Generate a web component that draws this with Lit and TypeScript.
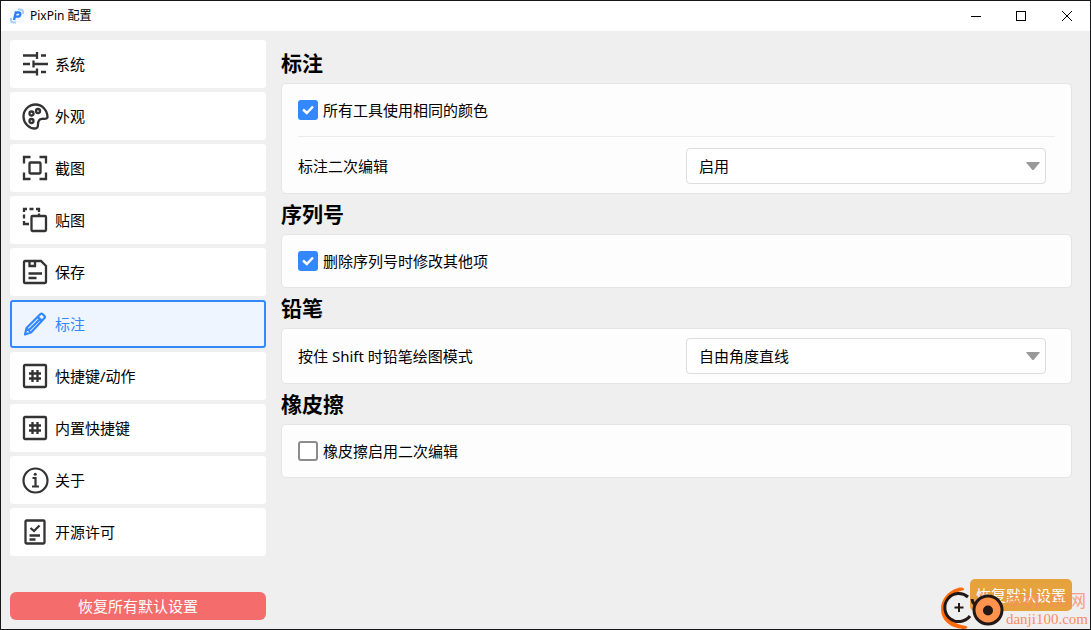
import { LitElement, html, svg, css } from "lit";
import { customElement, property, state } from "lit/decorators.js";

const ICONS: Record<string, unknown> = {
  sliders: svg`<g fill="none" stroke="currentColor" stroke-width="2.300">
    <path d="M1 4.500H15M19 4.500H24M15 1V8M1 13H8M11.500 13H26M11.500 9.500V16.500M1 21H15M19 21H24M15 17.500V24.500"/></g>`,
  palette: svg`<g fill="none" stroke="currentColor" stroke-width="2.300">
    <path d="M25.500 14.500C25.500 7 20 1.500 13.500 1.500S1.500 6.900 1.500 13.500 6.900 25.500 13 25.500C15.500 25.500 16 23.500 16 21.500C16 17.500 17.500 16 20 15.800C22.500 15.600 24.500 16.500 25.500 14.500Z"/>
    <circle cx="9.500" cy="10.500" r="2"/><circle cx="16" cy="8" r="2"/><circle cx="9.500" cy="18" r="2"/></g>`,
  capture: svg`<g fill="none" stroke="currentColor" stroke-width="2.300">
    <path d="M2 8.500V2H8.500M17.500 2H24V8.500M24 17.500V24H17.500M8.500 24H2V17.500"/><rect x="7.500" y="7.500" width="11" height="11" rx="1"/></g>`,
  paste: svg`<g fill="none" stroke="currentColor" stroke-width="2.300">
    <path d="M2 5V2H5M7.500 2H11.500M14 2H17V5M2 7.500V11.500M2 14V17H7M17 6.500V8"/><rect x="9.500" y="9" width="14.500" height="15" rx="1"/></g>`,
  save: svg`<g fill="none" stroke="currentColor" stroke-width="2.300">
    <path d="M3 2H19L24 7V23Q24 24 23 24H3Q2 24 2 23V3Q2 2 3 2ZM7.500 2V7H13V2M6.500 14.500H20M6.500 19H14.500"/></g>`,
  pencil: svg`<g fill="none" stroke="currentColor" stroke-width="2.200" stroke-linejoin="round">
    <path d="M3 23.500L4.500 17L18.500 3Q19.500 2 20.500 3L22.500 5Q23.500 6 22.500 7L9 21.500L3 23.500ZM15.500 5.500L20 10M4.500 17L9 21.500M18 8L6.800 19.300"/></g>`,
  hash: svg`<g fill="none" stroke="currentColor" stroke-width="2.300">
    <rect x="2" y="2" width="22" height="22" rx="1"/><path d="M10.500 7V19M15.500 7V19M7 10.500H19M7 15.500H19"/></g>`,
  info: svg`<g fill="none" stroke="currentColor" stroke-width="2.200">
    <circle cx="13.500" cy="13.500" r="12"/><path d="M10.500 11H13.500V19M10 19.500H17"/><circle cx="13.200" cy="7.300" r="1.500" fill="currentColor" stroke="none"/></g>`,
  license: svg`<g fill="none" stroke="currentColor" stroke-width="2.300">
    <rect x="3.500" y="1.500" width="19" height="23" rx="1"/><path d="M8.500 9L12 12L17.500 6.500M7.500 16.500H18M7.500 20.500H13.500"/></g>`,
};

const NAV: [string, string][] = [
  ["sliders", "系统"],
  ["palette", "外观"],
  ["capture", "截图"],
  ["paste", "贴图"],
  ["save", "保存"],
  ["pencil", "标注"],
  ["hash", "快捷键/动作"],
  ["hash", "内置快捷键"],
  ["info", "关于"],
  ["license", "开源许可"],
];

@customElement("check-row")
class CheckRow extends LitElement {
  @property() label = "";
  @property({ type: Boolean }) checked = false;

  static styles = css`
    :host { display: block; }
    .row { display: flex; align-items: center; gap: 5px; height: 52px; }
    .box { display: grid; flex: none; width: 20px; height: 20px; }
    .box > * { grid-area: 1 / 1; }
    input {
      appearance: none; margin: 0; width: 20px; height: 20px; box-sizing: border-box;
      border: 2px solid #8c8c8c; border-radius: 3px; background: #fff;
    }
    input:checked { border-color: #3388ff; background: #3388ff; }
    .tick { pointer-events: none; fill: none; stroke: #fff; z-index: 1; }
  `;

  render() {
    return html`<label class="row">
      <span class="box">
        <input type="checkbox" .checked=${this.checked}
          @change=${(e: Event) => (this.checked = (e.target as HTMLInputElement).checked)} />
        ${this.checked
          ? html`<svg class="tick" width="20" height="20" viewBox="0 0 20 20"><path stroke-width="2.500" d="M5 9.500L8.800 13L15 6.500" /></svg>`
          : ""}
      </span>
      <span>${this.label}</span>
    </label>`;
  }
}

@customElement("select-row")
class SelectRow extends LitElement {
  @property() label = "";
  @property({ type: Array }) options: string[] = [];

  static styles = css`
    :host { display: block; }
    .row {
      display: grid; grid-template-columns: minmax(0, 1fr) minmax(0, 360px);
      align-items: center; height: 54px; padding-right: 9px;
    }
    .field { display: grid; align-items: center; }
    .field > * { grid-area: 1 / 1; }
    select {
      appearance: none; width: 100%; height: 36px; box-sizing: border-box; margin: 0;
      padding: 0 32px 0 12px; border: 1px solid #dcdcdc; border-radius: 4px;
      background: #fff; color: #000; font: inherit;
    }
    .arrow { justify-self: end; margin-right: 6px; pointer-events: none; z-index: 1; }
  `;

  render() {
    return html`<div class="row">
      <label for="choice">${this.label}</label>
      <div class="field">
        <select id="choice">${this.options.map((o) => html`<option>${o}</option>`)}</select>
        <svg class="arrow" width="14" height="8" viewBox="0 0 14 8"><path d="M1 0H13Q14.500 0 13.500 1L8 7.500Q7 8.500 6 7.500L.5 1Q-.5 0 1 0Z" fill="#999" /></svg>
      </div>
    </div>`;
  }
}

@customElement("site-mark")
class SiteMark extends LitElement {
  static styles = css`
    :host { display: flex; pointer-events: none; color: #f98d62; }
    .logo { display: block; flex: none; }
    .words { display: flex; flex-direction: column; padding: 5px 2px 0 0; margin-left: 1px; }
    .cn { font-size: 17px; line-height: 18px; white-space: nowrap; opacity: 0.8; }
    .url { font: 15px/18px "Liberation Serif", serif; }
  `;

  render() {
    return html`
      <svg class="logo" width="64" height="42" viewBox="0 0 64 42" fill="none">
        <path d="M23 3C24 1 20 0 17 1C7 4 0 12 0 22C0 33 9 41 22 42C26 42 28 40 25 39C12 37 4 31 4 21C4 12 11 6 23 3Z" fill="#ff6a0d" />
        <path d="M27 10A14 14 0 1 0 29 29" stroke="#231815" stroke-width="3" />
        <path d="M13.500 20.500H22.500M18 16V25" stroke="#231815" stroke-width="2" />
        <path d="M31 12Q31 15 34 18" stroke="#231815" stroke-width="3" />
        <circle cx="47" cy="23" r="14" fill="#ff934d" stroke="#231815" stroke-width="3" />
        <circle cx="47" cy="23.500" r="5" fill="#231815" />
      </svg>
      <div class="words"><span class="cn">单机100网</span><span class="url">danji100.com</span></div>
    `;
  }
}

@customElement("app-root")
class AppRoot extends LitElement {
  @state() private current = 5;

  static styles = css`
    :host {
      display: flex; flex-direction: column; position: relative; box-sizing: border-box;
      min-height: 100vh; border: 1px solid #17171a; background: #efefef; color: #000;
      font: 15px/20px "Noto Sans", "Noto Sans CJK SC", sans-serif;
    }
    button { font: inherit; border: 0; margin: 0; padding: 0; cursor: pointer; }
    .titlebar { display: flex; align-items: center; height: 30px; padding-left: 8px; background: #fff; }
    .title { margin-left: 5px; flex: 1; font-size: 12px; }
    .win { display: grid; place-items: center; width: 46px; height: 30px; background: none; }
    .win svg { stroke: #000; fill: none; }
    .body { flex: 1; display: flex; gap: 15px; padding: 9px 18px 9px 9px; }
    .side { display: flex; flex-direction: column; flex: none; width: 256px; }
    nav { display: flex; flex-direction: column; gap: 4px; }
    .item {
      display: flex; align-items: center; gap: 5px; height: 48px; box-sizing: border-box;
      padding-left: 10px; border: 2px solid #fff; border-radius: 3px; background: #fff; color: #000;
    }
    .icon { color: #333; }
    .item.on { border-color: #3388ff; background: #eef5ff; color: #3388ff; }
    .item.on .icon { color: #3388ff; }
    .reset-all { margin-top: auto; height: 28px; border-radius: 6px; background: #f56c6c; color: #fff; }
    main { flex: 1; min-width: 0; display: flex; flex-direction: column; padding-top: 3px; }
    h2 { margin: 0; font-size: 21px; line-height: 40px; font-weight: 700; }
    .card { padding: 0 16px; border: 1px solid #e4e4e4; border-radius: 5px; background: #fdfdfd; }
    hr { width: 100%; height: 1px; margin: 0 0 2px; border: 0; background: #ebebeb; }
    .foot { display: flex; justify-content: flex-end; margin-top: auto; padding-bottom: 9px; }
    .reset { padding: 0 6px; height: 32px; border-radius: 5px; background: #e6a23c; color: #fff; }
    site-mark { position: absolute; right: 0; bottom: 0; }
  `;

  render() {
    return html`
      <header class="titlebar">
        <svg width="16" height="16" viewBox="0 0 16 16">
          <rect x="1" y="1" width="14" height="14" rx="3" fill="#f4f8ff" />
          <path d="M9 1.500H11.500Q14 1.500 14 4V6M2 10V12Q2 14.500 5 14.500H7" fill="none" stroke="#abcdfb" stroke-width="2" />
          <path d="M5 12L6.800 4.500H9.500Q11.800 4.500 11.300 6.700Q10.800 8.700 8.500 8.700H6.500" fill="none" stroke="#2d7ff9" stroke-width="2.300" />
        </svg>
        <span class="title">PixPin 配置</span>
        <button class="win" aria-label="最小化"><svg width="11" height="11"><path d="M1 5.500H11" /></svg></button>
        <button class="win" aria-label="最大化"><svg width="11" height="11"><rect x=".5" y=".5" width="9" height="9" /></svg></button>
        <button class="win" aria-label="关闭"><svg width="11" height="11"><path d="M0 0L10 10M10 0L0 10" /></svg></button>
      </header>
      <div class="body">
        <div class="side">
          <nav>
            ${NAV.map(([icon, text], i) => html`<button class="item ${i === this.current ? "on" : ""}"
              @click=${() => (this.current = i)}>
              <svg class="icon" width="28" height="28" viewBox="0 -1 28 28">${ICONS[icon]}</svg><span>${text}</span>
            </button>`)}
          </nav>
          <button class="reset-all">恢复所有默认设置</button>
        </div>
        <main>
          <h2>标注</h2>
          <section class="card">
            <check-row label="所有工具使用相同的颜色" checked></check-row>
            <hr />
            <select-row label="标注二次编辑" .options=${["启用", "禁用"]}></select-row>
          </section>
          <h2>序列号</h2>
          <section class="card"><check-row label="删除序列号时修改其他项" checked></check-row></section>
          <h2>铅笔</h2>
          <section class="card">
            <select-row label="按住 Shift 时铅笔绘图模式" .options=${["自由角度直线", "固定角度直线"]}></select-row>
          </section>
          <h2>橡皮擦</h2>
          <section class="card"><check-row label="橡皮擦启用二次编辑"></check-row></section>
          <div class="foot"><button class="reset">恢复默认设置</button></div>
        </main>
      </div>
      <site-mark></site-mark>
    `;
  }
}
